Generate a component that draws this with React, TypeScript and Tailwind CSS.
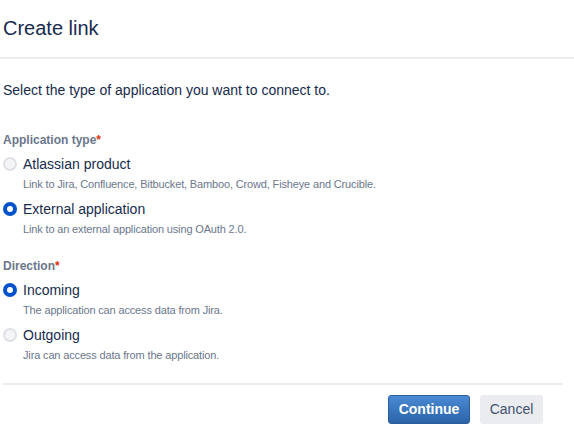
import React, { useState } from 'react';

type Option = { value: string; label: string; desc: string };

const APP_TYPES: Option[] = [
    { value: 'atlassian', label: 'Atlassian product', desc: 'Link to Jira, Confluence, Bitbucket, Bamboo, Crowd, Fisheye and Crucible.' },
    { value: 'external', label: 'External application', desc: 'Link to an external application using OAuth 2.0.' },
];

const DIRECTIONS: Option[] = [
    { value: 'incoming', label: 'Incoming', desc: 'The application can access data from Jira.' },
    { value: 'outgoing', label: 'Outgoing', desc: 'Jira can access data from the application.' },
];

const Radio: React.FC<{ checked: boolean }> = ({ checked }) =>
    checked ? (
        <span className="w-[14px] h-[14px] rounded-full bg-[#0052cc] flex items-center justify-center shrink-0">
            <span className="w-[6px] h-[6px] rounded-full bg-white"></span>
        </span>
    ) : (
        <span className="w-[14px] h-[14px] rounded-full bg-[#f4f5f7] border-2 border-[#dfe1e6] shrink-0"></span>
    );

const RadioGroup: React.FC<{ label: string; options: Option[]; value: string; onChange: (v: string) => void }> = ({ label, options, value, onChange }) => (
    <div>
        <div className="text-[12px] leading-4 font-semibold text-[#6b778c]">
            {label}<span className="text-[#de350b]">*</span>
        </div>
        {options.map((o, i) => (
            <div key={o.value} className={i === 0 ? 'mt-[6px]' : 'mt-[7px]'}>
                <label className="flex items-center h-5 cursor-pointer" onClick={() => onChange(o.value)}>
                    <Radio checked={value === o.value} />
                    <span className="ml-[6px] text-[14px] text-[#172b4d]">{o.label}</span>
                </label>
                <p className="mt-[2px] ml-[20px] text-[11px] leading-4 tracking-[-0.15px] text-[#6b778c]">{o.desc}</p>
            </div>
        ))}
    </div>
);

const App: React.FC = () => {
    const [appType, setAppType] = useState('external');
    const [direction, setDirection] = useState('incoming');

    return (
        <div className="w-[574px] h-[444px] bg-white overflow-hidden" style={{ fontFamily: '"Liberation Sans", Arial, sans-serif' }}>
            <header className="h-[59px] flex items-center pl-[3px] border-b-2 border-[#ebecf0]">
                <h1 className="text-[20px] text-[#172b4d] -mt-[2px]">Create link</h1>
            </header>

            <div className="px-[3px]">
                <p className="mt-[21px] text-[14px] leading-5 text-[#172b4d]">Select the type of application you want to connect to.</p>

                <div className="mt-8">
                    <RadioGroup label="Application type" options={APP_TYPES} value={appType} onChange={setAppType} />
                </div>
                <div className="mt-[21px]">
                    <RadioGroup label="Direction" options={DIRECTIONS} value={direction} onChange={setDirection} />
                </div>
            </div>

            <footer className="mt-[20px] ml-[3px] w-[560px] border-t-2 border-[#ebecf0] pt-[10px] pr-5 flex justify-end gap-[10px]">
                <button className="w-[82px] h-[29px] rounded-[3px] border border-[#2a5d9b] bg-gradient-to-b from-[#4a8ad4] to-[#2b63a8] text-white text-[14px] font-bold">
                    Continue
                </button>
                <button className="w-[63px] h-[29px] rounded-[3px] bg-[#ebecf0] text-[#42526e] text-[14px]">Cancel</button>
            </footer>
        </div>
    );
};

export default App;
